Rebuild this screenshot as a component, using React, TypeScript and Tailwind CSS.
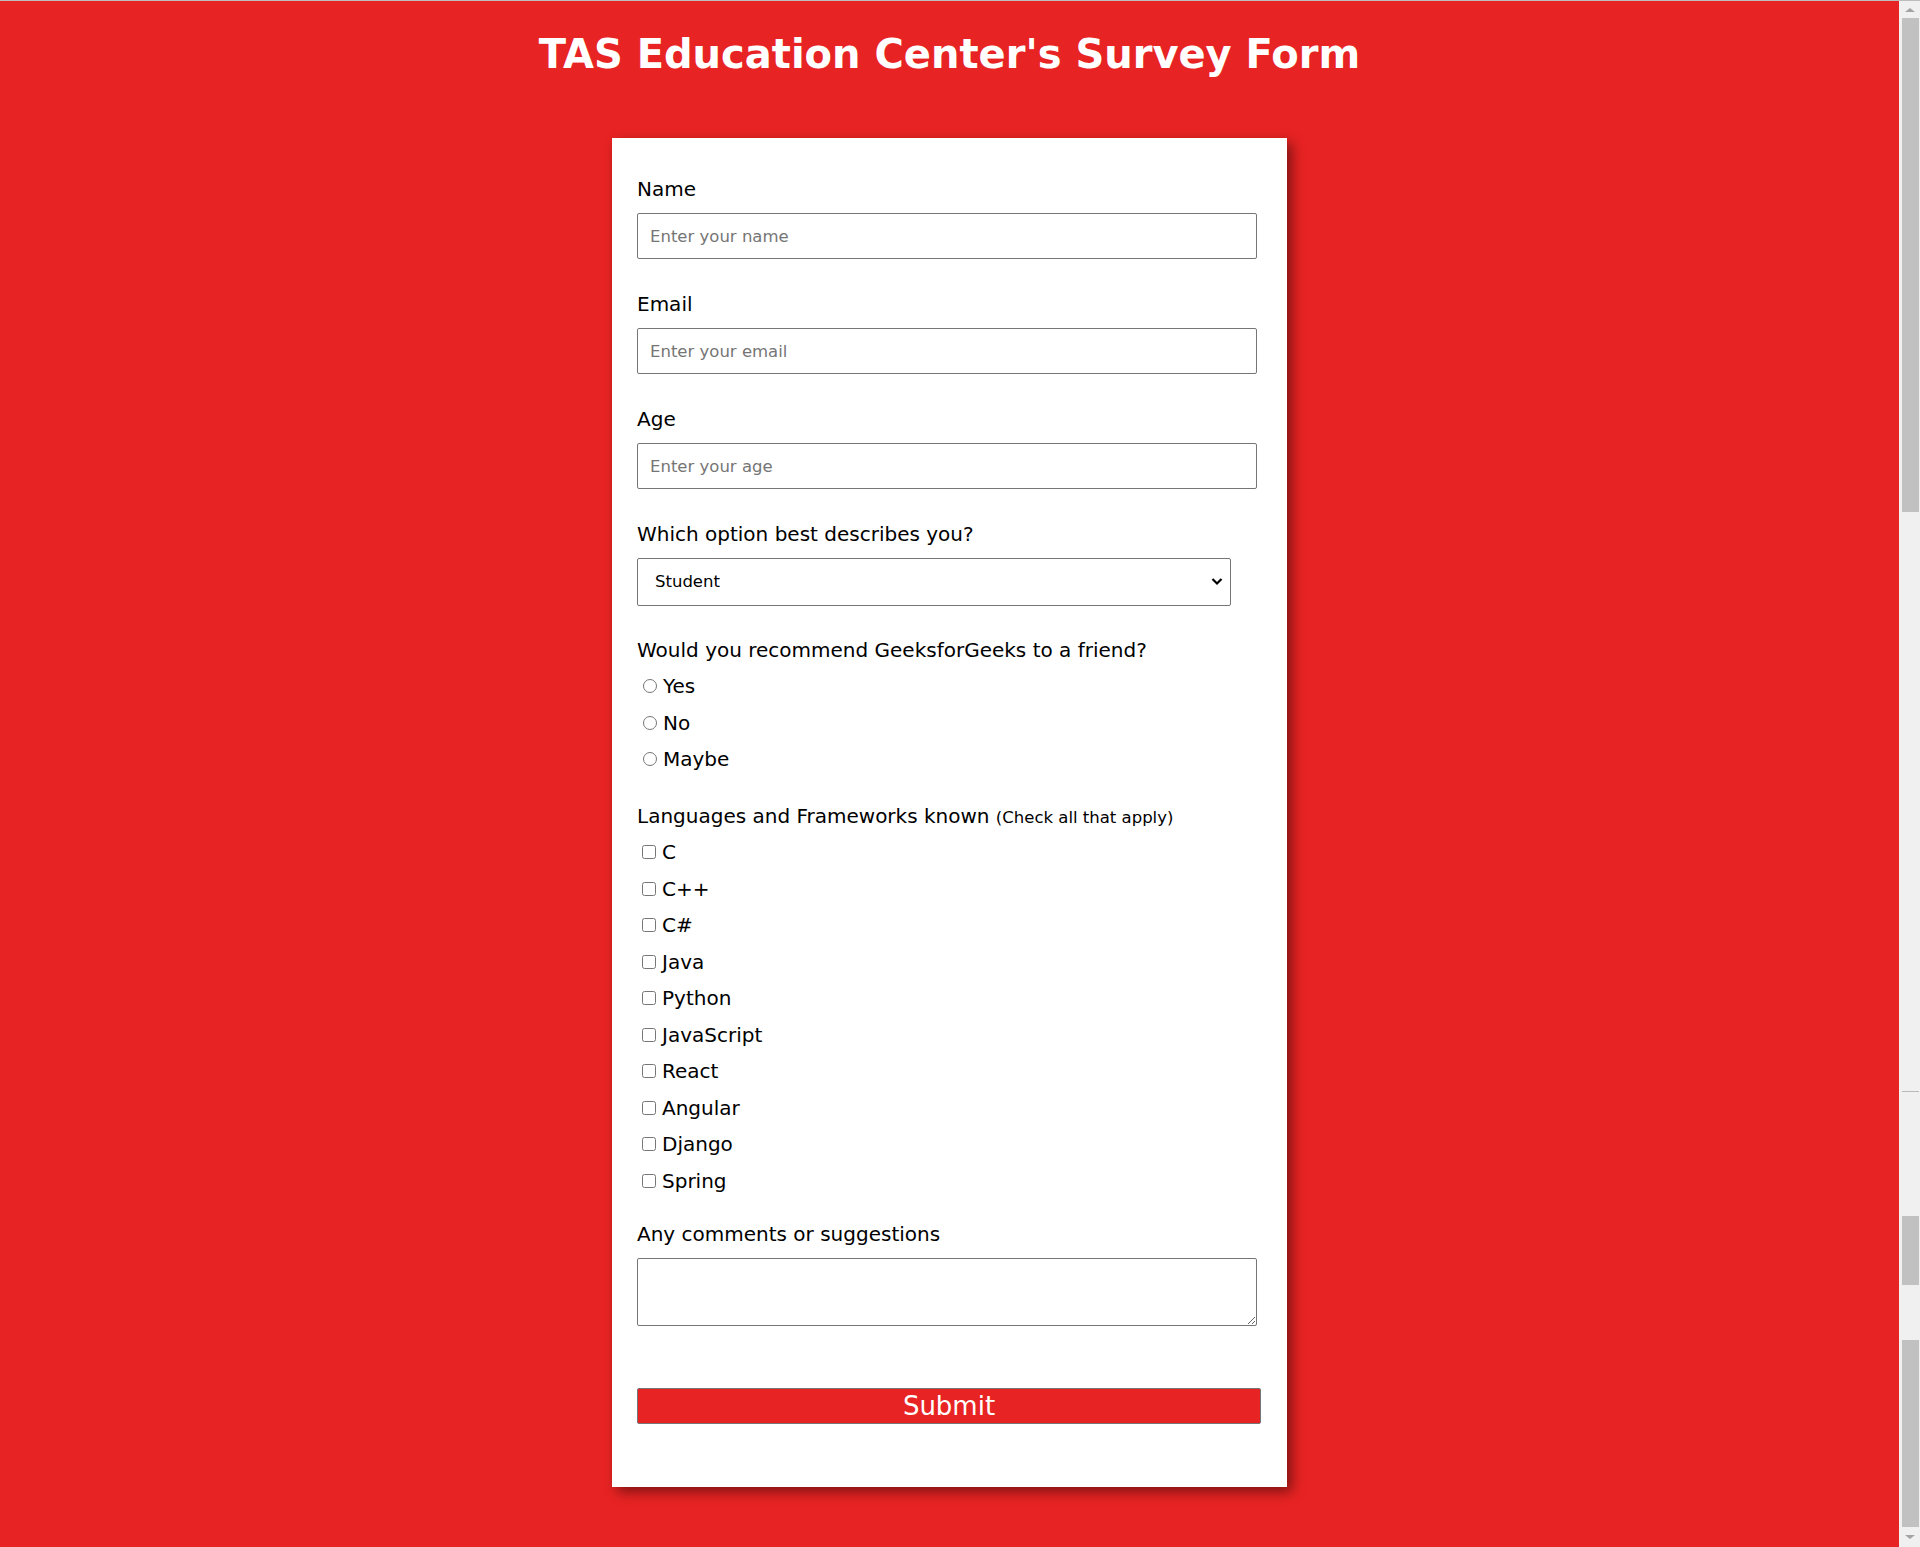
import React from "react";

const radios = ["Yes", "No", "Maybe"];
const langs = ["C", "C++", "C#", "Java", "Python", "JavaScript", "React", "Angular", "Django", "Spring"];

function Field({ label, placeholder, type = "text" }: { label: string; placeholder: string; type?: string }) {
  return (
    <div className="mb-[33px]">
      <label className="block text-[20px] leading-[24px] mb-[12px] text-black">{label}</label>
      <input
        type={type}
        placeholder={placeholder}
        className="block w-[620px] h-[46px] border border-[#767676] rounded-[2px] pl-[12px] text-[16.5px] text-black placeholder:text-[#757575] bg-white outline-none"
      />
    </div>
  );
}

function Scrollbar() {
  return (
    <div className="w-[21px] h-full bg-[#f0f0f0] flex flex-col items-center">
      <div className="h-[17px] w-full flex items-center justify-center">
        <div className="w-0 h-0 border-l-[5px] border-r-[5px] border-b-[4px] border-l-transparent border-r-transparent border-b-[#a3a3a3]" />
      </div>
      <div className="ml-[2px] w-[17px] h-[494px] bg-[#c1c1c1]" />
      <div className="ml-[2px] w-[17px] h-px bg-[#b9b9b9] mt-[579px]" />
      <div className="ml-[2px] w-[17px] h-[69px] bg-[#c1c1c1] mt-[124px]" />
      <div className="ml-[2px] w-[17px] h-[187px] bg-[#c1c1c1] mt-[55px]" />
      <div className="h-[19px] w-full flex items-center justify-center">
        <div className="w-0 h-0 border-l-[5px] border-r-[5px] border-t-[4px] border-l-transparent border-r-transparent border-t-[#a3a3a3]" />
      </div>
    </div>
  );
}

export default function App() {
  return (
    <div className="w-[1920px] h-[1547px] overflow-hidden flex flex-col font-['DejaVu_Sans',sans-serif]">
      <div className="h-px w-full bg-[#bdbdbd]" />
      <div className="flex flex-1 min-h-0">
        <div className="flex-1 bg-[#e82323] flex flex-col items-center">
          <h1 className="mt-[29px] text-[40px] leading-[48px] font-bold text-white text-center">
            TAS Education Center's Survey Form
          </h1>
          <form
            className="mt-[60px] w-[675px] bg-white pl-[25px] pt-[39px] pb-[63px] shadow-[5px_5px_12px_rgba(0,0,0,0.45)]"
            onSubmit={(e) => e.preventDefault()}
          >
            <Field label="Name" placeholder="Enter your name" />
            <Field label="Email" placeholder="Enter your email" type="email" />
            <Field label="Age" placeholder="Enter your age" />

            <div className="mb-[32px]">
              <label className="block text-[20px] leading-[24px] mb-[12px] text-black">Which option best describes you?</label>
              <div className="relative w-[594px] h-[48px]">
                <select
                  defaultValue="Student"
                  className="appearance-none w-full h-full border border-[#767676] rounded-[2px] pl-[17px] text-[16.5px] text-black bg-white outline-none"
                >
                  <option>Student</option>
                  <option>Intern</option>
                  <option>Professional</option>
                  <option>Other</option>
                </select>
                <svg className="absolute right-[8px] top-[19px] pointer-events-none" width="12" height="9" viewBox="0 0 12 9">
                  <path d="M1.5 2 L6 6.5 L10.5 2" fill="none" stroke="#000" strokeWidth="2.2" />
                </svg>
              </div>
            </div>

            <div className="mb-[26px]">
              <label className="block text-[20px] leading-[24px] mb-[6px] text-black">Would you recommend GeeksforGeeks to a friend?</label>
              {radios.map((r) => (
                <label key={r} className="flex items-center h-[36.6px] text-[20px] text-black">
                  <input type="radio" name="recommend" className="ml-[6px] mr-[6px] w-[14px] h-[14px]" />
                  {r}
                </label>
              ))}
            </div>

            <div className="mb-[23px]">
              <label className="block text-[20px] leading-[24px] mb-[4px] text-black">
                Languages and Frameworks known <span className="text-[16.5px]">(Check all that apply)</span>
              </label>
              {langs.map((l) => (
                <label key={l} className="flex items-center h-[36.5px] text-[20px] text-black">
                  <input type="checkbox" className="ml-[5px] mr-[6px] w-[14px] h-[14px]" />
                  {l}
                </label>
              ))}
            </div>

            <div className="mb-[62px]">
              <label className="block text-[20px] leading-[24px] mb-[12px] text-black">Any comments or suggestions</label>
              <textarea className="block w-[620px] h-[68px] border border-[#767676] rounded-[2px] bg-white outline-none" />
            </div>

            <button
              type="submit"
              className="block w-[624px] h-[36px] bg-[#e82323] border border-[#767676] rounded-[2px] text-white text-[26px] leading-[32px]"
            >
              Submit
            </button>
          </form>
        </div>
        <Scrollbar />
      </div>
    </div>
  );
}
